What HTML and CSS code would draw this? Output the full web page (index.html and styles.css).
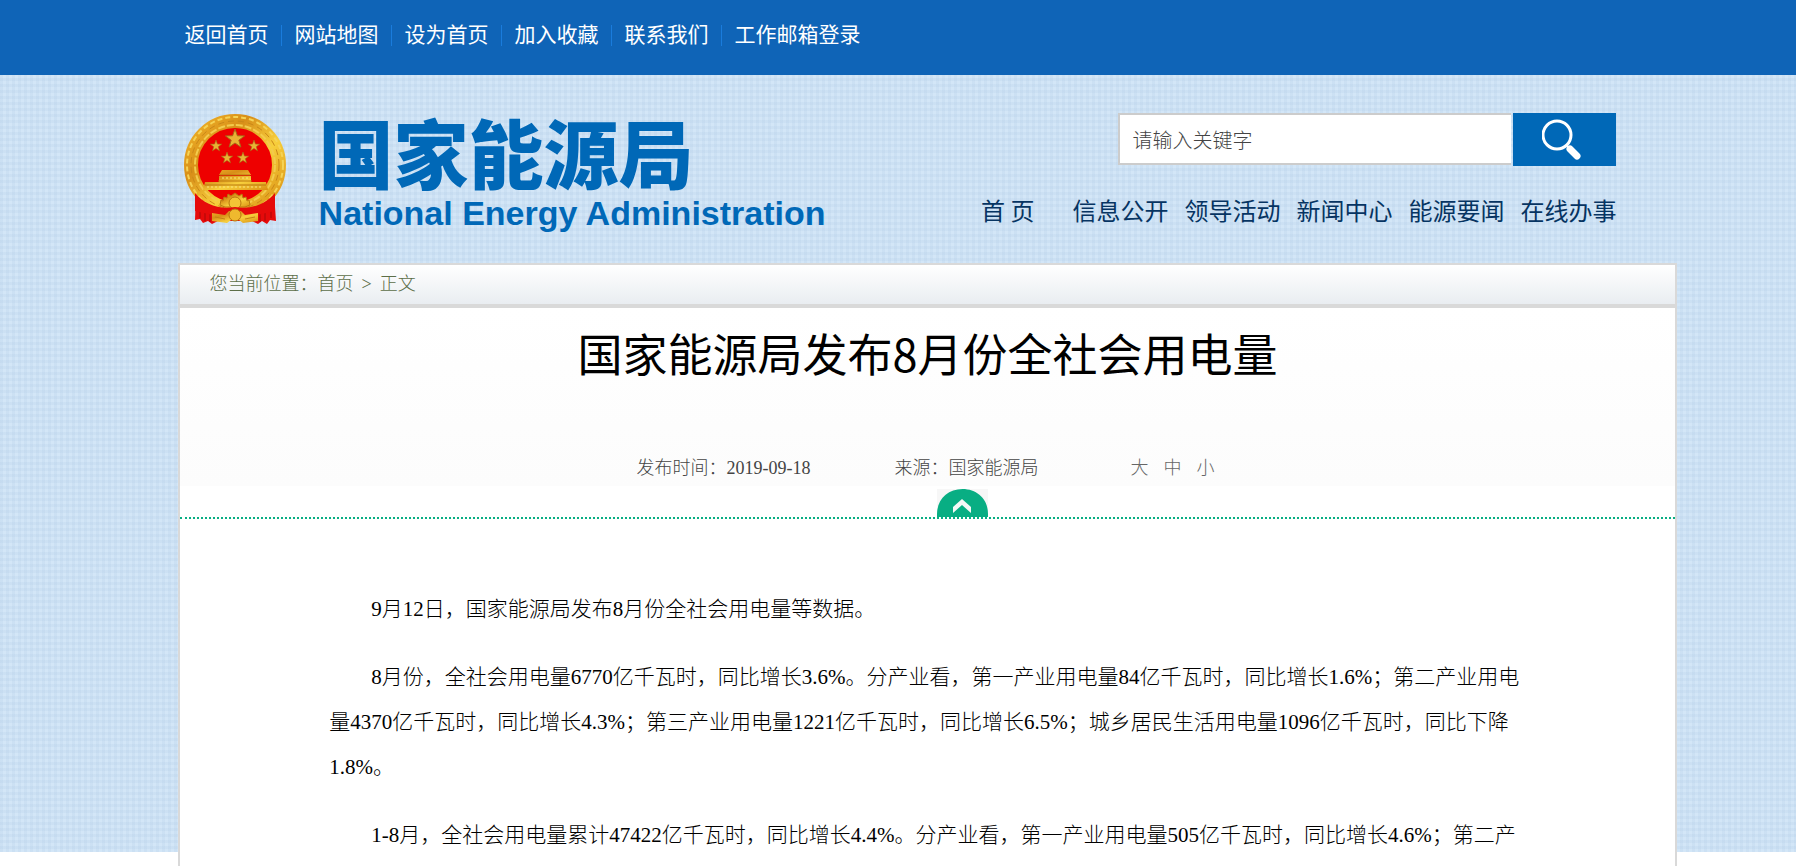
FILE: index.html
```html
<!DOCTYPE html>
<html lang="zh-CN">
  <head>
    <meta charset="UTF-8" />
    <meta name="viewport" content="width=device-width, initial-scale=1.0" />
    <title>国家能源局发布8月份全社会用电量</title>
    <link rel="stylesheet" href="styles.css">
  </head>
  <body>
    <div class="topbar">
      <div class="wrap top-links">
        <a href="#">返回首页</a>
        <a href="#">网站地图</a>
        <a href="#">设为首页</a>
        <a href="#">加入收藏</a>
        <a href="#">联系我们</a>
        <a href="#">工作邮箱登录</a>
      </div>
    </div>

    <header class="wrap header">
      <a href="#" class="logo">
        <!-- 国徽 -->
        <svg class="emblem" viewBox="0 0 104 112" aria-hidden="true">
          <defs>
            <linearGradient id="gold" x1="0" y1="0" x2="1" y2="1">
              <stop offset="0" stop-color="#f0b429" />
              <stop offset="0.3" stop-color="#d88e18" />
              <stop offset="0.6" stop-color="#f7cf3c" />
              <stop offset="1" stop-color="#d98f12" />
            </linearGradient>
            <path id="star" d="M0-10 2.4-3.2 9.5-3.1 3.8 1.2 5.9 8.1 0 4-5.9 8.1-3.8 1.2-9.5-3.1-2.4-3.2z" />
          </defs>
          <path fill="#e60a0a" d="M13 78 12 107l5-1 3 4 5-2 4 3 6-3h34l6 3 4-3 5 3 3-4 6 1-2-29z" />
          <path stroke="#a80808" fill="none" d="M17 90v15M22 92v16M27 96v13M77 96v13M82 92v16M88 90v15" />
          <circle cx="52" cy="50" r="44" fill="#ee0000" />
          <circle cx="52" cy="52" r="44" fill="none" stroke="url(#gold)" stroke-width="14" />
          <circle cx="52" cy="52" r="48" fill="none" stroke="#f6d355" stroke-width="2" stroke-dasharray="5 3" />
          <circle cx="52" cy="52" r="44" fill="none" stroke="#c98719" stroke-width="1" stroke-dasharray="6 4" />
          <circle cx="52" cy="52" r="40" fill="none" stroke="#f3cb4c" stroke-width="2" stroke-dasharray="7 2" />
          <g fill="#e9b234" stroke="#a56a18" stroke-width="1">
            <use href="#star" transform="translate(52 26)" />
            <use href="#star" transform="translate(33 33) scale(.6)" />
            <use href="#star" transform="translate(71 33) scale(.6)" />
            <use href="#star" transform="translate(44 45) scale(.6)" />
            <use href="#star" transform="translate(60 45) scale(.6)" />
          </g>
          <path fill="url(#gold)" d="M39 57h26l3 5H36zM36 63h32v6h15l2 8H20l2-8h14z" />
          <path stroke="#b9770f" fill="none" d="M37 62h30M35 68h34M22 72h61" />
          <path stroke="#fae780" stroke-dasharray="2 2" fill="none" d="M39 65h26M24 74h56" />
          <path fill="url(#gold)" stroke="#b9770f" d="M37 92l1-5 2 1 1-4 3 1 1-4 3 2 4-3 4 3 3-2 1 4 3-1 1 4 2-1 1 5-5 2H42z" />
          <circle cx="52" cy="90" r="6" fill="#f3c536" stroke="#b9770f" />
          <path fill="#e60a0a" d="M12 80c9 11 24 17 40 14 16 3 31-3 40-14l0 18-22 5H34l-22-5z" />
          <path fill="url(#gold)" d="M29 100l13 2 4-4h12l4 4 13-2v8l-15 2-4-3h-8l-4 3-15-2z" />
          <circle cx="52" cy="102" r="6" fill="#efb92e" stroke="#b9770f" />
          <path stroke="#c58113" fill="none" d="M32 104l10 2M62 106l10-2" />
        </svg>
        <span class="logo-text">
          <span class="logo-cn">国家能源局</span>
          <span class="logo-en">National Energy Administration</span>
        </span>
      </a>

      <div class="header-right">
        <form class="search">
          <input type="text" placeholder="请输入关键字" aria-label="请输入关键字" />
          <button type="button" aria-label="搜索">
            <svg viewBox="0 0 40 42" aria-hidden="true">
              <circle cx="15" cy="16" r="14" fill="none" stroke="#fff" stroke-width="3" />
              <path stroke="#fff" stroke-width="2" d="M24 26l3 3" />
              <path stroke="#fff" stroke-width="7" stroke-linecap="round" d="M28 30l7 7" />
            </svg>
          </button>
        </form>
        <nav class="main-nav">
          <a href="#" class="home">首 页</a>
          <a href="#">信息公开</a>
          <a href="#">领导活动</a>
          <a href="#">新闻中心</a>
          <a href="#">能源要闻</a>
          <a href="#">在线办事</a>
        </nav>
      </div>
    </header>

    <main class="wrap main">
      <div class="content">
        <div class="crumbs">
          <span>您当前位置：<a href="#">首页</a></span>
          <span>&gt;</span>
          <span>正文</span>
        </div>

        <div class="article-head">
          <h1>国家能源局发布8月份全社会用电量</h1>
          <div class="meta">
            <span>发布时间：2019-09-18</span>
            <span>来源：国家能源局</span>
            <span class="font-size">
              <button type="button">大</button>
              <button type="button">中</button>
              <button type="button">小</button>
            </span>
          </div>
        </div>

        <div class="fold">
          <button type="button" aria-label="收起">
            <svg viewBox="0 0 51 28" aria-hidden="true">
              <path fill="#f7f7f7" d="M0 0h51v28H0z" />
              <path fill="#08ae83" d="M0 28v-3C0 10 11 0 25.500 0S51 10 51 25v3z" />
              <path fill="#f4f8f6" d="M16 18l9-8 9 8v6l-9-8-9 8z" />
            </svg>
          </button>
        </div>

        <div class="article">
          <p>9月12日，国家能源局发布8月份全社会用电量等数据。</p>
          <p>8月份，全社会用电量6770亿千瓦时，同比增长3.6%。分产业看，第一产业用电量84亿千瓦时，同比增长1.6%；第二产业用电量4370亿千瓦时，同比增长4.3%；第三产业用电量1221亿千瓦时，同比增长6.5%；城乡居民生活用电量1096亿千瓦时，同比下降1.8%。</p>
          <p>1-8月，全社会用电量累计47422亿千瓦时，同比增长4.4%。分产业看，第一产业用电量505亿千瓦时，同比增长4.6%；第二产</p>
        </div>
      </div>
    </main>
  </body>
</html>
```
FILE: styles.css
```css
* {
  box-sizing: border-box;
}

html {
  overflow-x: hidden;
  background-color: #fff;
}

body {
  margin: 0;
  min-height: 100vh;
  display: flex;
  flex-direction: column;
  font-family: "Liberation Serif", "Noto Sans CJK SC", serif;
  font-weight: 300;
  color: #000;
  /* 网格底纹，只铺到 852px */
  background-image:
    repeating-linear-gradient(90deg, rgba(170, 198, 226, 0.18) 0, rgba(170, 198, 226, 0.18) 3px, transparent 3px, transparent 6px),
    repeating-linear-gradient(rgba(170, 198, 226, 0.18) 0, rgba(170, 198, 226, 0.18) 3px, transparent 3px, transparent 6px),
    linear-gradient(#d3e6f7, #d3e6f7);
  background-size: 100% 852px;
  background-repeat: no-repeat;
}

a {
  color: inherit;
  text-decoration: none;
}

button {
  padding: 0;
  border: none;
  background: none;
  font: inherit;
  color: inherit;
  cursor: pointer;
}

.wrap {
  width: 80%;
  margin: 0 auto;
}

/* 顶部链接 */
.topbar {
  background-color: #0f64b7;
}

.top-links {
  display: flex;
  align-items: center;
  height: 75px;
  padding: 0 5px 4px;
  font-size: 21px;
  line-height: 21px;
  font-weight: 400;
  color: #fff;
}

.top-links a {
  padding-right: 12px;
  margin-right: 13px;
  border-right: 1px solid #1a7cdc;
}

.top-links a:last-child {
  border-right: none;
}

/* 头部 */
.header {
  display: flex;
  justify-content: space-between;
  height: 188px;
  padding-top: 38px;
}

.logo {
  display: flex;
  gap: 32px;
  padding-left: 3px;
  color: #0068b7;
}

.emblem {
  width: 104px;
  height: 112px;
}

.logo-text {
  display: flex;
  flex-direction: column;
}

.logo-cn {
  font-family: "Noto Sans CJK SC", sans-serif;
  font-weight: 900;
  font-size: 75px;
  line-height: 76px;
}

.logo-en {
  font-family: "Liberation Sans", sans-serif;
  font-weight: 700;
  font-size: 34px;
  line-height: 48px;
}

.header-right {
  display: flex;
  flex-direction: column;
  align-items: flex-end;
  gap: 26px;
  font-family: "Noto Sans CJK SC", sans-serif;
}

.search {
  display: flex;
  gap: 2px;
}

.search input {
  width: 393px;
  height: 52px;
  padding: 0 12px;
  border: 2px solid #ccc;
  border-right: none;
  background-color: #fff;
  font-family: inherit;
  font-weight: 300;
  font-size: 20px;
  outline: none;
}

.search input::placeholder {
  color: #444;
}

.search button {
  display: flex;
  align-items: center;
  justify-content: center;
  width: 103px;
  height: 53px;
  padding-right: 6px;
  background-color: #0068b7;
}

.search svg {
  width: 40px;
  height: 42px;
}

.main-nav {
  display: flex;
  gap: 16px;
  font-size: 24px;
  line-height: 36px;
  font-weight: 400;
  color: #063462;
}

.main-nav .home {
  margin-right: 22px;
}

/* 正文 */
.main {
  flex: 1;
  display: flex;
}

.content {
  flex: 1;
  display: flex;
  flex-direction: column;
  margin-left: -2px;
  margin-right: -61px;
  border: 2px solid #d9d9d9;
  border-bottom: none;
  background-color: #fff;
}

.crumbs {
  display: flex;
  gap: 8px;
  height: 43px;
  padding: 0 30px;
  border-bottom: 4px solid #d9d9d9;
  background-image: linear-gradient(#fff, #e9edf1);
  font-size: 18px;
  line-height: 38px;
  color: #5c6e48;
}

.article-head {
  background-image: linear-gradient(#fff, #fcfcfc);
  text-align: center;
}

h1 {
  margin: 0;
  padding-top: 13px;
  font-family: "Noto Sans CJK SC", sans-serif;
  font-weight: 400;
  font-size: 45px;
  line-height: 64px;
}

.meta {
  display: flex;
  justify-content: center;
  gap: 84px;
  padding: 73px 4px 8px 0;
  font-size: 18px;
  line-height: 20px;
  color: #444;
}

.font-size {
  display: flex;
  gap: 15px;
  margin-left: 8px;
  color: #666;
}

.fold {
  display: flex;
  justify-content: center;
  padding: 3px 0 0 70px;
  border-bottom: 2px dotted #08ae83;
}

.fold svg {
  display: block;
  width: 51px;
  height: 28px;
}

.article {
  padding: 68px 10% 0;
  font-size: 21px;
  line-height: 45px;
}

.article p {
  margin: 0 0 23px;
  text-indent: 2em;
}

.article p:last-child {
  margin-bottom: 0;
}
```
